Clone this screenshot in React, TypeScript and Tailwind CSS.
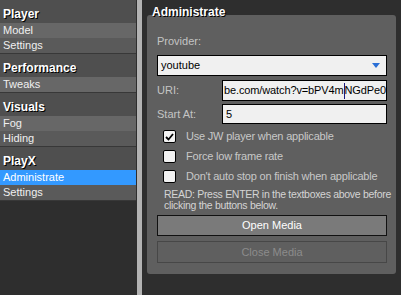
import React from "react";

const font = { fontFamily: '"Liberation Sans", Arial, sans-serif' };

type Item = { label: string; selected?: boolean };
type Group = { title: string; items: Item[] };

const groups: Group[] = [
  { title: "Player", items: [{ label: "Model" }, { label: "Settings" }] },
  { title: "Performance", items: [{ label: "Tweaks" }] },
  { title: "Visuals", items: [{ label: "Fog" }, { label: "Hiding" }] },
  { title: "PlayX", items: [{ label: "Administrate", selected: true }, { label: "Settings" }] },
];

function Checkbox({ checked }: { checked?: boolean }) {
  return (
    <div className="w-[13px] h-[13px] rounded-[2px] border border-black bg-[#f2f2f2] flex items-center justify-center shrink-0">
      {checked && (
        <svg width="9" height="8" viewBox="0 0 9 8">
          <path d="M1 4 L3.5 6.5 L8 1" stroke="#000" strokeWidth="1.8" fill="none" />
        </svg>
      )}
    </div>
  );
}

export default function App() {
  return (
    <div className="w-[401px] h-[295px] bg-[#2e2e2e] flex overflow-hidden text-[11px]" style={font}>
      <div className="w-[136px] flex flex-col shrink-0">
        {groups.map((g, gi) => (
          <div key={gi} className="flex flex-col border-b border-[#383838]">
            <div className="h-[23px] bg-[#4f4f4f] pl-[3px] pt-[7px] text-[12px] leading-[14px] font-bold text-white [text-shadow:1px_1px_0_#000]">
              {g.title}
            </div>
            {g.items.map((it, ii) => (
              <div
                key={ii}
                className={
                  "h-[15px] pl-[3px] leading-[15px] text-[#f0f0f0] " +
                  (it.selected ? "bg-[#3399ff] text-white" : ii % 2 === 0 ? "bg-[#676767]" : "bg-[#5a5a5a]")
                }
              >
                {it.label}
              </div>
            ))}
          </div>
        ))}
      </div>
      <div className="w-[1px] bg-[#2e2e2e] shrink-0" />
      <div className="w-[5px] bg-[#b3b3b3] shrink-0" />
      <div className="w-[5px] shrink-0" />
      <div className="w-[249px] flex flex-col shrink-0">
        <div className="h-[15px] relative">
          <div className="absolute left-[5px] top-[5px] text-[12px] leading-[14px] font-bold text-white [text-shadow:1px_1px_0_#000] z-10">
            Administrate
          </div>
        </div>
        <div className="h-[259px] bg-[#5f5f5f] rounded-[3px] pl-[10px] pr-[9px] pt-[19px] flex flex-col">
          <div className="h-[14px] leading-[14px] text-[#c4c4c4]">Provider:</div>
          <div className="mt-[7px] h-[21px] bg-[#f0f0f0] border border-black flex items-center justify-between pl-[3px] pr-[6px] text-black">
            <span>youtube</span>
            <svg width="8" height="5" viewBox="0 0 8 5">
              <path d="M0 0 H8 L4 5 Z" fill="#2a6fd6" />
            </svg>
          </div>
          <div className="mt-[4px] flex">
            <div className="w-[65px] pt-[3px] leading-[14px] text-[#c4c4c4]">URI:</div>
            <div className="flex-1 h-[21px] bg-[#f0f0f0] border border-black flex items-center pl-[1px] text-black overflow-hidden whitespace-nowrap tracking-[-0.12px]">
              <span>be.com/watch?v=bPV4m</span>
              <span className="inline-block w-[1px] h-[16px] bg-[#1a1a80]" />
              <span>NGdPe0</span>
            </div>
          </div>
          <div className="mt-[3px] flex">
            <div className="w-[65px] pt-[3px] leading-[14px] text-[#c4c4c4]">Start At:</div>
            <div className="flex-1 h-[20px] bg-[#f0f0f0] border border-black flex items-center pl-[3px] text-black">
              5
            </div>
          </div>
          <div className="mt-[6px] flex flex-col gap-[7px] pl-[6px]">
            {[
              { l: "Use JW player when applicable", c: true },
              { l: "Force low frame rate" },
              { l: "Don't auto stop on finish when applicable" },
            ].map((r, i) => (
              <div key={i} className="flex items-center h-[13px]">
                <Checkbox checked={r.c} />
                <span className="ml-[10px] text-[#c8c8c8] whitespace-nowrap leading-[13px] tracking-[-0.2px]">{r.l}</span>
              </div>
            ))}
          </div>
          <div className="mt-[6px] pl-[7px] text-[10.5px] leading-[11px] text-[#d4d4d4] whitespace-nowrap tracking-[-0.3px]">
            READ: Press ENTER in the textboxes above before
            <br />
            clicking the buttons below.
          </div>
          <div className="mt-[4px] h-[21px] bg-[#7a7a7a] border border-[#111] flex items-center justify-center text-white">
            Open Media
          </div>
          <div className="mt-[5px] h-[22px] bg-[#5f5f5f] border border-[#474747] flex items-center justify-center text-[#8c8c8c]">
            Close Media
          </div>
        </div>
      </div>
    </div>
  );
}
